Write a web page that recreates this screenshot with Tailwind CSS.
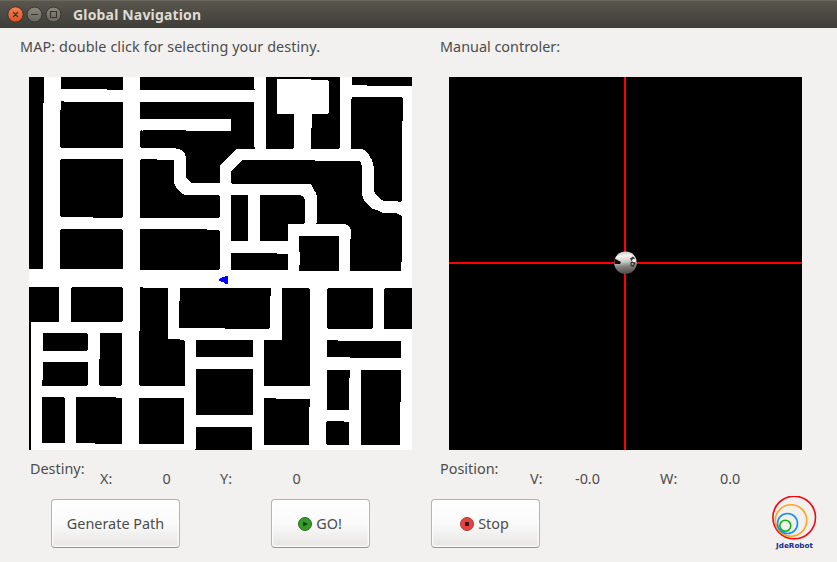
<!DOCTYPE html>
<html lang="en">
<head>
<meta charset="utf-8">
<title>Global Navigation</title>
<script src="https://cdn.jsdelivr.net/npm/@tailwindcss/browser@4"></script>
</head>
<body class="w-[837px] h-[562px] overflow-hidden bg-[#f2f1f0] font-['Noto_Sans','Open_Sans',sans-serif] text-[14.4px] leading-5 text-[#4c4c4c]">
<div class="flex h-[562px] w-[837px] flex-col">
  <header class="flex h-7 shrink-0 items-center border-t border-[#6b675d] bg-linear-to-b from-[#59564d] to-[#3e3d38] pl-[7px]">
    <svg class="h-5 w-[56px]" viewBox="0 0 56 20">
      <defs>
        <linearGradient id="o" x1="0" y1="0" x2="0" y2="1"><stop offset="0" stop-color="#f58158"/><stop offset="1" stop-color="#e2501f"/></linearGradient>
        <linearGradient id="g" x1="0" y1="0" x2="0" y2="1"><stop offset="0" stop-color="#8b887f"/><stop offset="1" stop-color="#69675f"/></linearGradient>
      </defs>
      <g stroke="#35332e" stroke-width="1"><circle cx="8.500" cy="9.500" r="7.700" fill="url(#o)"/><circle cx="27.500" cy="9.500" r="7.500" fill="url(#g)"/><circle cx="46.500" cy="9.500" r="7.500" fill="url(#g)"/></g>
      <path d="M6 7l5 5M11 7l-5 5M24 9.500h7M43.500 6.500h6v6h-6z" fill="none" stroke="#3b3429" stroke-width="1.100"/>
    </svg>
    <h1 class="ml-[10px] text-[14px] font-bold tracking-[0.17px] text-[#dfdbd2]">Global Navigation</h1>
  </header>

  <main class="flex flex-col">
    <div class="flex h-[49px] pt-[9px] pl-5">
      <div class="w-[420px] whitespace-nowrap tracking-[0.08px]">MAP: double click for selecting your destiny.</div>
      <div class="whitespace-nowrap">Manual controler:</div>
    </div>

    <div class="flex gap-[37px] pl-[29px]">
      <svg class="h-[373px] w-[383px] bg-white" viewBox="29 77 383 373" shape-rendering="crispEdges">
        <path d="M29 77H44V103H43V268L42 269H29Z
          M61 77H123V90H107V89H61Z
          M61 101H64V102H123V148H61V147H60V110H61Z
          M61 159H123V217H122V218H93V217H61V216H60V160H61Z
          M61 229H122V230H123V269H60V230H61Z
          M140 77H254V79H254V89H255V90H140Z
          M140 102H254V147H255V149H236L220 165V183H191L188 180L186 178V158L185 154L181 150L179 149H176V148H141V147H140V131H141V130H142V131H143V130H186V131H231V129H232V130H231V119H140Z
          M141 159H157V160H174V184L175 185L177 189L180 192L185 195H219V196H220V217H219V218H140V160H141Z
          M140 229H207V230H219V231H220V269H219V270H140Z
          M266 77H340V148H339V149H311V128H312V114H328V113H329V81H328V80H311V79H277V114H294V148H293V149H266Z
          M352 77H412V86H367V85H352Z
          M352 97H402V98H403V121H402V201H401V202H398V201H384L380 199L377 196L375 193L374 191V168L372 160L369 155L366 151L362 149H351V99H352Z
          M243 160H315V161H359L361 163L362 166V195L364 200L368 205L373 209L379 211L383 213H396L400 215L402 217V262H401V271H350V239H351V230L350 228L347 225L345 224H316V223H317V195H316V192H315L313 188L311 184H232V183H231V171L235 167Z
          M231 195H248V241H231Z
          M260 195H299L302 196L304 198L305 200V223H304V224H288V241H260Z
          M231 253H277V254H288V270H231Z
          M299 236H339V271H299V265H300V252H299Z
          M29 287H59V322H31V450H29Z
          M72 287H122V288H123V321H122V322H71V288H72Z
          M140 287H143V288H168V339H180V340H184V341H185V386H140V385H139V331H140Z
          M180 288H271V296H270V328H269V329H225V328H179V301H180Z
          M282 288H309V289H310V386H264V340H282Z
          M328 288H373V328H372V329H328V328H327V289H328Z
          M385 288H412V329H384V289H385Z
          M43 333H87V334H88V350H87V351H43Z
          M43 362H88V385H87V386H42V380H43Z
          M100 333H122V385H121V386H100V385H99V359H100Z
          M42 397H64V398H65V443H42Z
          M76 397H116V398H122V444H95V443H76Z
          M139 398H184V444H139Z
          M196 340H253V357H196Z
          M196 369H253V415H196Z
          M196 427H252V450H195V449H196Z
          M264 398H276V399H310V407H309V445H264Z
          M327 340H338V341H401V358H350V357H327Z
          M327 370H350V378H349V410H327Z
          M327 421H344V422H349V445H327V444H326V422H327Z
          M361 370H401V402H400V445H361Z" fill="#000"/>
        <path d="M218 280L223 277H225V276H228V284H225V283L220 281Z" fill="#00f"/>
      </svg>

      <svg class="h-[373px] w-[353px] bg-black" viewBox="449 77 353 373">
        <defs><linearGradient id="ball" x1=".4" y1="0" x2=".5" y2="1"><stop offset="0" stop-color="#c9c8c6"/><stop offset=".2" stop-color="#f4f3f1"/><stop offset=".45" stop-color="#cccbc7"/><stop offset=".65" stop-color="#85837f"/><stop offset="1" stop-color="#4b4a47"/></linearGradient></defs>
        <path d="M624 77h2v373h-2zM449 262h353v2H449z" fill="#f00"/>
        <circle cx="625.500" cy="262.800" r="11.300" fill="url(#ball)"/>
        <path d="M614.500 258.500L621 262l-1 2h-5.500z" fill="#090909"/>
        <path d="M630 258.500l3-2 2 2-1.500 1.500-2 1zM630.500 262l3-1 2 2-2 4-3-1z" fill="#393837"/>
        <circle cx="634" cy="260.500" r="1.800" fill="#eee"/><circle cx="632.500" cy="264" r="1" fill="#aaa"/>
      </svg>
    </div>

    <div class="grid h-[49px] grid-cols-[70px_50px_70px_50px_170px_90px_50px_80px_60px_60px] pl-[30px] whitespace-nowrap">
      <span class="pt-[9px]">Destiny:</span>
      <span class="pt-[19px]">X:</span>
      <span class="pt-[19px] pl-[12.5px]">0</span>
      <span class="pt-[19px]">Y:</span>
      <span class="pt-[19px] pl-[22.5px]">0</span>
      <span class="pt-[9px]">Position:</span>
      <span class="pt-[19px]">V:</span>
      <span class="pt-[19px] -ml-[5px]">-0.0</span>
      <span class="pt-[19px]">W:</span>
      <span class="pt-[19px]">0.0</span>
    </div>

    <div class="flex pl-[51px]">
      <button class="h-[49px] w-[129px] rounded-[4px] border border-[#b6b3ae] border-b-[#989591] bg-linear-to-b from-white via-[#fafafa] via-50% to-[#e6e5e4] shadow-[inset_0_0_2px_1px_#fff]">Generate Path</button>
      <button class="ml-[91px] flex h-[49px] w-[99px] items-center justify-center gap-1 rounded-[4px] border border-[#b6b3ae] border-b-[#989591] bg-linear-to-b from-white via-[#fafafa] via-50% to-[#e6e5e4] pr-px shadow-[inset_0_0_2px_1px_#fff]">
        <svg class="h-[14px] w-[14px]" viewBox="0 0 14 14"><circle cx="7" cy="7" r="6.500" fill="#379b27" stroke="#2d6925"/><path d="M5 4.500v5l5-2.500z" fill="#153c11"/></svg>GO!
      </button>
      <button class="ml-[61px] flex h-[49px] w-[109px] items-center justify-center gap-1 rounded-[4px] border border-[#b6b3ae] border-b-[#989591] bg-linear-to-b from-white via-[#fafafa] via-50% to-[#e6e5e4] pr-[2px] shadow-[inset_0_0_2px_1px_#fff]">
        <svg class="h-[14px] w-[14px]" viewBox="0 0 14 14"><circle cx="7" cy="7" r="6.500" fill="#e54240" stroke="#b13b38"/><path d="M5 5h4v4H5z" fill="#351413"/></svg>Stop
      </button>
      <svg class="-mt-[3px] ml-[230px] h-[57px] w-[50px]" viewBox="770 496 50 57">
        <g fill="none" stroke-width="1.600"><circle cx="794.200" cy="517.500" r="21.300" stroke="#f00a14"/><circle cx="791" cy="520.500" r="15.700" stroke="#ffa51e"/><circle cx="787.500" cy="523.500" r="10" stroke="#168ff5"/><circle cx="785.300" cy="525.700" r="5.500" stroke="#10b417"/></g>
        <text x="776" y="548" font-family="DejaVu Sans" font-size="7" font-weight="bold" fill="#152a86" textLength="37" lengthAdjust="spacingAndGlyphs">JdeRobot</text>
      </svg>
    </div>
  </main>
</div>
</body>
</html>
